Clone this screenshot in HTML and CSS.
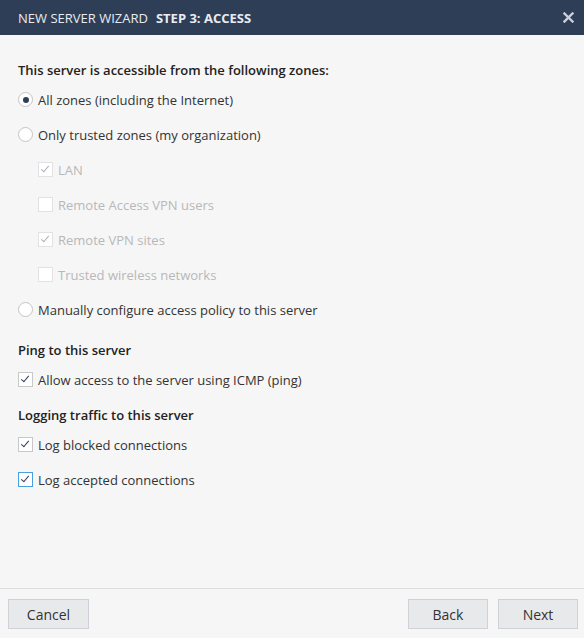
FILE: index.html
```html
<!DOCTYPE html>
<html lang="en">
<head>
  <meta charset="UTF-8">
  <title>New Server Wizard</title>
  <link rel="stylesheet" href="styles.css">
</head>
<body>
  <div class="wizard">
    <div class="wizard-header">
      <span class="wizard-title">NEW SERVER WIZARD</span>
      <span class="wizard-step">STEP 3: ACCESS</span>
      <span class="wizard-close">
        <svg width="11" height="11" viewBox="0 0 11 11"><path d="M1.5 1.5 L9.5 9.5 M9.5 1.5 L1.5 9.5" stroke="#c9d0db" stroke-width="2.4" stroke-linecap="square"/></svg>
      </span>
    </div>

    <div class="wizard-body">
      <div class="section-title zones">This server is accessible from the following zones:</div>

      <div class="option"><span class="radio checked"></span>All zones (including the Internet)</div>
      <div class="option"><span class="radio"></span>Only trusted zones (my organization)</div>

      <div class="option sub disabled"><span class="check on"></span>LAN</div>
      <div class="option sub disabled"><span class="check"></span>Remote Access VPN users</div>
      <div class="option sub disabled"><span class="check on"></span>Remote VPN sites</div>
      <div class="option sub disabled"><span class="check"></span>Trusted wireless networks</div>

      <div class="option"><span class="radio"></span>Manually configure access policy to this server</div>

      <div class="section-title ping">Ping to this server</div>
      <div class="option"><span class="check on"></span>Allow access to the server using ICMP (ping)</div>

      <div class="section-title">Logging traffic to this server</div>
      <div class="option"><span class="check on"></span>Log blocked connections</div>
      <div class="option"><span class="check on focus"></span>Log accepted connections</div>
    </div>

    <div class="wizard-footer">
      <button class="btn">Cancel</button>
      <div class="spacer"></div>
      <button class="btn">Back</button>
      <button class="btn">Next</button>
    </div>
  </div>
</body>
</html>
```

FILE: styles.css
```css
/* General */
html, body {
  margin: 0;
  height: 100%;
}
body {
  font-family: "Open Sans", "Noto Sans", sans-serif;
  font-size: 13px;
  color: #333;
  background-color: #f6f6f6;
}

.wizard {
  display: flex;
  flex-direction: column;
  height: 638px;
}

/* Header */
.wizard-header {
  height: 35px;
  flex-shrink: 0;
  background-color: #2e3e56;
  color: #e8ecf2;
  display: flex;
  align-items: center;
  padding: 0 10px 0 18px;
  font-size: 13px;
}
.wizard-title {
  margin-right: 8px;
}
.wizard-step {
  font-weight: bold;
}
.wizard-close {
  margin-left: auto;
  display: flex;
}

/* Body */
.wizard-body {
  flex: 1;
  padding: 0 18px;
}
.section-title {
  font-weight: 600;
  color: #222;
  line-height: 18px;
  margin: 9px 0 3px;
}
.section-title.zones {
  margin-top: 26px;
}
.section-title.ping {
  margin-top: 14px;
}
.option {
  height: 35px;
  display: flex;
  align-items: center;
  color: #333;
}
.option.sub {
  padding-left: 20px;
}
.option.disabled {
  color: #b8b8b8;
}

/* Radio */
.radio {
  width: 13px;
  height: 13px;
  border: 1px solid #c4c4c4;
  border-radius: 50%;
  background-color: #fff;
  margin-right: 5px;
  position: relative;
  flex-shrink: 0;
}
.radio.checked::after {
  content: "";
  position: absolute;
  left: 3.5px;
  top: 3.5px;
  width: 6px;
  height: 6px;
  border-radius: 50%;
  background-color: #2e3e56;
}

/* Checkbox */
.check {
  width: 13px;
  height: 13px;
  border: 1px solid #c8c8c8;
  background-color: #fff;
  margin-right: 5px;
  position: relative;
  flex-shrink: 0;
}
.check.on::after {
  content: "";
  position: absolute;
  left: 4px;
  top: 1px;
  width: 3px;
  height: 7px;
  border: solid #2e3e56;
  border-width: 0 1.5px 1.5px 0;
  transform: rotate(40deg);
}
.check.focus {
  border-color: #4a9fe0;
}
.disabled .check,
.disabled .radio {
  border-color: #e2e2e2;
}
.disabled .check.on::after {
  border-color: #a9b0bd;
}

/* Footer */
.wizard-footer {
  flex-shrink: 0;
  border-top: 1px solid #dcdde1;
  display: flex;
  padding: 10px 6px 9px 8px;
  gap: 10px;
}
.spacer {
  flex: 1;
}
.btn {
  width: 80px;
  height: 30px;
  background-color: #e8e9eb;
  border: 1px solid #cfd1d6;
  font-family: inherit;
  font-size: 14px;
  color: #333;
  padding: 0;
}
.btn:first-child {
  width: 81px;
}
```
